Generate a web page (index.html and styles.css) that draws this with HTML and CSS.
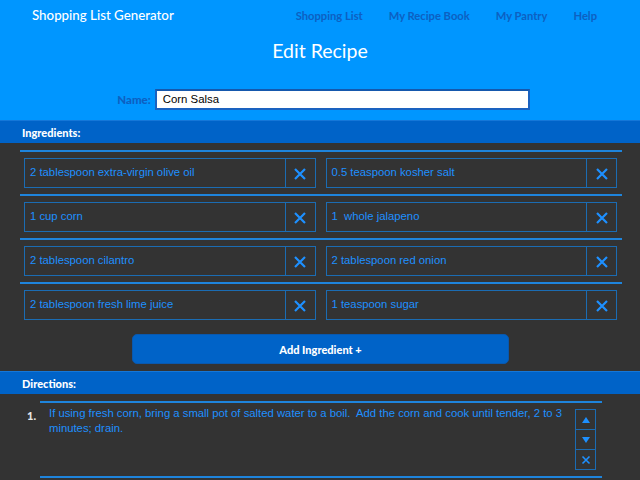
FILE: index.html
```html
<!DOCTYPE html>
<html>
<head>
<meta charset="utf-8">
<link rel="stylesheet" href="styles.css">
</head>
<body>
<header class="top">
  <div class="nav">
    <div class="brand">Shopping List Generator</div>
    <div class="links">
      <a>Shopping List</a>
      <a>My Recipe Book</a>
      <a>My Pantry</a>
      <a>Help</a>
    </div>
  </div>
  <h1 class="title">Edit Recipe</h1>
  <div class="name-row">
    <label class="name-label">Name:</label>
    <div class="name-input">Corn Salsa</div>
  </div>
</header>

<div class="bar">Ingredients:</div>
<div class="ingredients">
  <div class="row">
    <div class="item"><span class="txt">2 tablespoon extra-virgin olive oil</span><span class="del"><svg viewBox="0 0 12 12"><path d="M1 1L11 11M11 1L1 11"/></svg></span></div>
    <div class="item"><span class="txt">0.5 teaspoon kosher salt</span><span class="del"><svg viewBox="0 0 12 12"><path d="M1 1L11 11M11 1L1 11"/></svg></span></div>
  </div>
  <div class="row">
    <div class="item"><span class="txt">1 cup corn</span><span class="del"><svg viewBox="0 0 12 12"><path d="M1 1L11 11M11 1L1 11"/></svg></span></div>
    <div class="item"><span class="txt">1&nbsp; whole jalapeno</span><span class="del"><svg viewBox="0 0 12 12"><path d="M1 1L11 11M11 1L1 11"/></svg></span></div>
  </div>
  <div class="row">
    <div class="item"><span class="txt">2 tablespoon cilantro</span><span class="del"><svg viewBox="0 0 12 12"><path d="M1 1L11 11M11 1L1 11"/></svg></span></div>
    <div class="item"><span class="txt">2 tablespoon red onion</span><span class="del"><svg viewBox="0 0 12 12"><path d="M1 1L11 11M11 1L1 11"/></svg></span></div>
  </div>
  <div class="row">
    <div class="item"><span class="txt">2 tablespoon fresh lime juice</span><span class="del"><svg viewBox="0 0 12 12"><path d="M1 1L11 11M11 1L1 11"/></svg></span></div>
    <div class="item"><span class="txt">1 teaspoon sugar</span><span class="del"><svg viewBox="0 0 12 12"><path d="M1 1L11 11M11 1L1 11"/></svg></span></div>
  </div>
</div>
<div class="add-wrap"><button class="add">Add Ingredient +</button></div>

<div class="bar dir-bar">Directions:</div>
<div class="steps">
  <div class="step">
    <div class="num">1.</div>
    <div class="step-body">
      <div class="step-text">If using fresh corn, bring a small pot of salted water to a boil.  Add the corn and cook until tender, 2 to 3 minutes; drain.</div>
      <div class="ctrls">
        <span class="ctrl"><svg viewBox="0 0 10 10"><path class="fill" d="M5 2L9 8H1Z"/></svg></span>
        <span class="ctrl"><svg viewBox="0 0 10 10"><path class="fill" d="M1 2H9L5 8Z"/></svg></span>
        <span class="ctrl"><svg viewBox="0 0 10 10"><path d="M1.5 1.5L8.5 8.5M8.5 1.5L1.5 8.5"/></svg></span>
      </div>
    </div>
  </div>
</div>
</body>
</html>
```

FILE: styles.css
```css
* { box-sizing: border-box; }
body {
  margin: 0;
  background: #333333;
  font-family: "Liberation Sans", Arial, sans-serif;
  overflow: hidden;
}
.top {
  background: #0096ff;
  height: 120px;
  display: flex;
  flex-direction: column;
}
.nav {
  display: flex;
  justify-content: space-between;
  align-items: center;
  height: 30px;
  padding: 0 43px 0 32px;
}
.brand {
  font-family: "Lato", sans-serif;
  color: #ffffff;
  font-size: 13.3px;
  font-weight: 500;
}
.links {
  display: flex;
  gap: 26px;
}
.links a {
  font-family: "Lato", sans-serif;
  font-weight: bold;
  color: #0d60c2;
  font-size: 11.2px;
}
.title {
  margin: 6px 0 0;
  text-align: center;
  font-family: "Lato", sans-serif;
  font-weight: normal;
  color: #ffffff;
  font-size: 19.5px;
  line-height: 30px;
}
.name-row {
  display: flex;
  justify-content: center;
  align-items: center;
  gap: 4px;
  margin-top: 23px;
  padding-left: 7px;
}
.name-label {
  font-family: "Lato", sans-serif;
  font-weight: 900;
  font-size: 11.5px;
  color: #0d60c2;
}
.name-input {
  width: 375px;
  height: 21px;
  background: #ffffff;
  border: 2px solid #1a62c0;
  border-top-color: #1558ad;
  font-size: 11.4px;
  color: #000;
  padding: 2px 6px 0;
}
.bar {
  background: #0063c8;
  height: 23px;
  border-top: 1px solid #1577d8;
  color: #ffffff;
  font-family: "Lato", sans-serif;
  font-weight: 900;
  font-size: 11px;
  display: flex;
  align-items: center;
  padding-left: 22px;
}
.ingredients {
  padding: 7px 18px 0 20px;
}
.row {
  border-top: 2px solid #1e84dc;
  display: grid;
  grid-template-columns: 1fr 1fr;
  gap: 10px;
  padding: 6px 5px 6px 4px;
}
.item {
  display: flex;
  height: 30px;
  border: 1px solid #1b6cb3;
}
.txt {
  flex: 1;
  display: flex;
  align-items: center;
  padding-left: 5px;
  padding-bottom: 2px;
  color: #1e90ff;
  font-size: 11.3px;
  white-space: pre;
}
.del {
  width: 30px;
  border-left: 1px solid #1b6cb3;
  display: flex;
  align-items: center;
  justify-content: center;
}
.del svg {
  width: 12px;
  height: 12px;
  margin-top: 2px;
}
.del path, .ctrl path {
  stroke: #1e90ff;
  stroke-width: 2.2;
  fill: none;
}
.ctrl path { stroke-width: 1.6; }
.ctrl path.fill { fill: #1e90ff; stroke: none; }
.add-wrap {
  display: flex;
  justify-content: center;
  padding: 8px 0 7px 1px;
}
.add {
  width: 377px;
  height: 30px;
  background: #0063c8;
  border: 1px solid #0a58ad;
  border-radius: 5px;
  color: #ffffff;
  font-family: "Lato", sans-serif;
  font-weight: 900;
  font-size: 11px;
}
.steps {
  padding: 7px 38px 0 27px;
}
.step {
  display: flex;
}
.num {
  width: 13px;
  color: #e8e8e8;
  font-family: "Lato", sans-serif;
  font-weight: 900;
  font-size: 11px;
  padding-top: 8px;
}
.step-body {
  flex: 1;
  display: flex;
  border-top: 2px solid #1e84dc;
  border-bottom: 2px solid #1e84dc;
  height: 77px;
  padding: 0 6px 0 9px;
}
.step-text {
  flex: 1;
  color: #1e90ff;
  font-size: 11.3px;
  line-height: 15px;
  padding-top: 3px;
  padding-right: 8px;
  white-space: pre-wrap;
}
.ctrls {
  margin-top: 6px;
  display: flex;
  flex-direction: column;
  width: 21px;
  height: 61px;
  border: 1px solid #1b6cb3;
}
.ctrl {
  flex: 1;
  display: flex;
  align-items: center;
  justify-content: center;
}
.ctrl + .ctrl { border-top: 1px solid #1b6cb3; }
.ctrl svg { width: 10px; height: 10px; }
```
